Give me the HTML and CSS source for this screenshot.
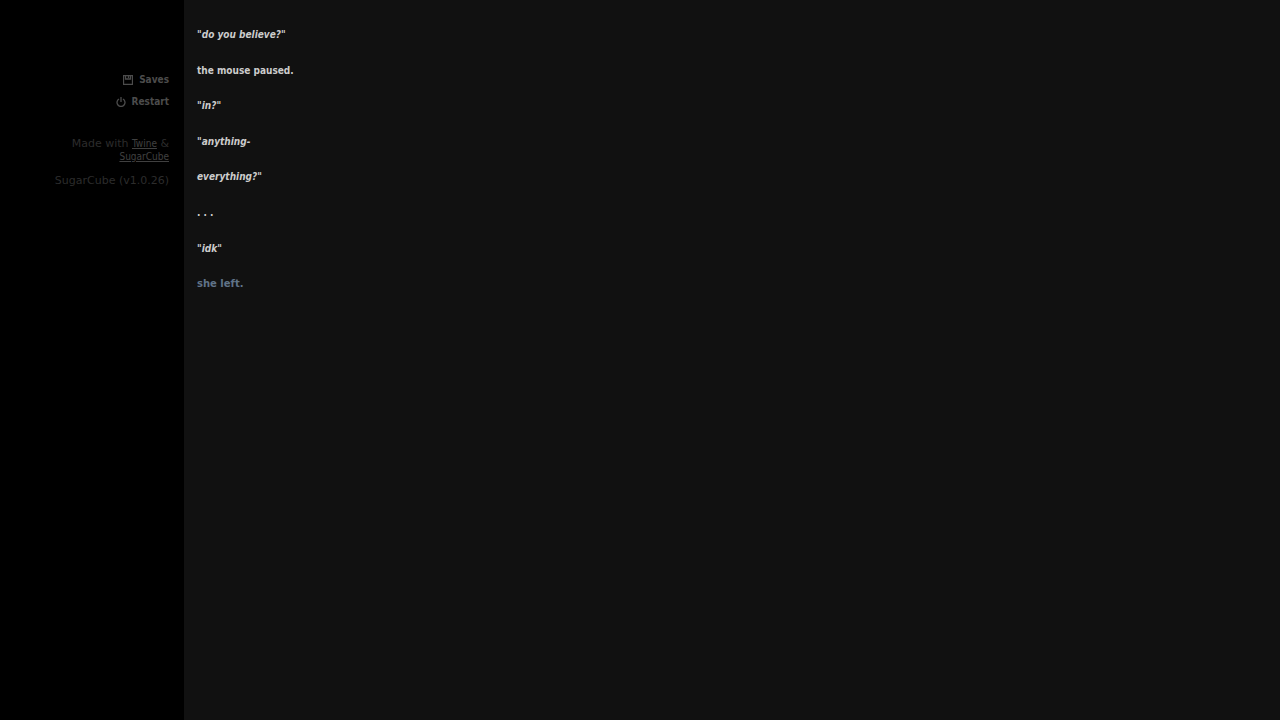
FILE: index.html
```html
<!DOCTYPE html>
<html lang="en">
<head>
<meta charset="UTF-8">
<meta name="viewport" content="width=device-width, initial-scale=1.0">
<title>do you believe?</title>
<link rel="stylesheet" href="styles.css">
</head>
<body>

<nav class="sidebar">
  <ul class="menu">
    <li>
      <a href="#saves">
        <svg class="icon" viewBox="0 0 10 10"><path d="M.5.5h9v9h-9z"/><path d="M2.500.5v3.500h5v-3.500M5.500 1v2"/></svg>
        Saves
      </a>
    </li>
    <li>
      <a href="#restart">
        <svg class="icon" viewBox="0 0 10 10"><path d="M3 2a4 4 0 1 0 4 0M5 0v5"/></svg>
        Restart
      </a>
    </li>
  </ul>
  <footer class="credits">
    <p>Made with <a href="#twine">Twine</a> &amp; <a href="#sugarcube">SugarCube</a></p>
    <p>SugarCube (v1.0.26)</p>
  </footer>
</nav>

<main class="passage">
  <p><em>"do you believe?"</em></p>
  <p>the mouse paused.</p>
  <p><em>"in?"</em></p>
  <p><em>"anything-</em></p>
  <p><em>everything?"</em></p>
  <p>. . .</p>
  <p><em>"idk"</em></p>
  <p><a href="#left">she left.</a></p>
</main>

</body>
</html>
```
FILE: styles.css
```css
body {
  display: flex;
  min-height: 100vh;
  margin: 0;
  background: #111;
  color: #ccc;
  font-family: "DejaVu Sans Condensed", "DejaVu Sans", sans-serif;
  font-size: 10px;
}
a {
  text-decoration: none;
}
p {
  margin: 0;
}
.sidebar {
  box-sizing: border-box;
  width: 184px;
  flex-shrink: 0;
  padding: 69px 15px 0 45px;
  background: #000;
  color: #2c2c2c;
  text-align: right;
}
.menu {
  margin: 0 0 24px;
  padding: 0;
  list-style: none;
  font-weight: bold;
  line-height: 22px;
}
.menu a {
  display: flex;
  align-items: center;
  justify-content: flex-end;
  gap: 6px;
  color: #4c4c4c;
}
.icon {
  width: 10px;
  height: 10px;
  fill: none;
  stroke: currentColor;
  stroke-width: 1.3;
}
.credits {
  font-family: "DejaVu Sans", sans-serif;
  font-size: 11px;
  line-height: 13px;
}
.credits p {
  margin-bottom: 11px;
}
.credits a {
  color: #404040;
  font-family: "DejaVu Sans Condensed", "DejaVu Sans", sans-serif;
  font-size: 10px;
  text-decoration: underline;
}
.passage {
  flex: 1;
  padding: 26px 13px;
  font-weight: bold;
  line-height: 1.76;
}
.passage p {
  margin-bottom: 18px;
}
.passage a {
  color: #607388;
  font-family: "DejaVu Sans", sans-serif;
}
```
